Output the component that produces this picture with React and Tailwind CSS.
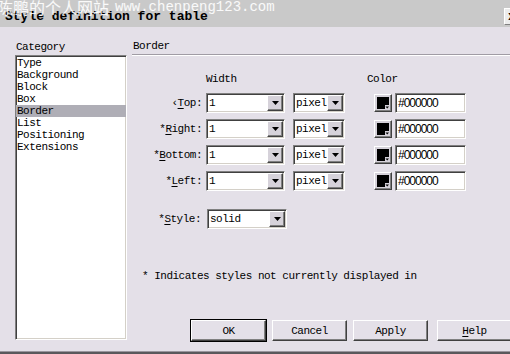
import React from "react";

const mono = { fontFamily: '"Liberation Mono", "DejaVu Sans Mono", monospace' };

const sunken =
  "border border-t-[#808080] border-l-[#808080] border-b-white border-r-white shadow-[inset_1px_1px_0_#404040,inset_-1px_-1px_0_#d4d0c8]";
const raised =
  "border border-t-white border-l-white border-b-[#404040] border-r-[#404040] shadow-[inset_-1px_-1px_0_#808080]";

const Arrow = () => (
  <svg width="7" height="4" viewBox="0 0 7 4">
    <polygon points="0,0 7,0 3.5,4" fill="#000" />
  </svg>
);

// dropdown box with the little arrow button on its right
const Select = ({ value, width }) => (
  <div className={`flex h-[20px] items-center bg-white ${sunken}`} style={{ width }}>
    <span className="flex-1 pl-[2px] leading-[16px]">{value}</span>
    <div className={`mr-[1px] flex h-[16px] w-[16px] items-center justify-center bg-[#d6d2da] ${raised}`}>
      <Arrow />
    </div>
  </div>
);

const Swatch = () => (
  <div className={`flex h-[18px] w-[18px] items-center justify-center bg-[#d6d2da] ${raised}`}>
    <svg width="12" height="12" viewBox="0 0 12 12">
      <polygon points="0,0 12,0 12,8 8,8 8,12 0,12" fill="#000" />
      <polygon points="8.5,9.5 12,9.5 10.25,11.5" fill="#000" />
    </svg>
  </div>
);

const Label = ({ pre, u, rest }) => (
  <span>
    {pre}
    <span className="underline underline-offset-2">{u}</span>
    {rest}
  </span>
);

const rows = [
  { pre: "‹", u: "T", rest: "op:" },
  { pre: "*", u: "R", rest: "ight:" },
  { pre: "*", u: "B", rest: "ottom:" },
  { pre: "*", u: "L", rest: "eft:" },
];

const categories = ["Type", "Background", "Block", "Box", "Border", "List", "Positioning", "Extensions"];

const Button = ({ children, isDefault, className = "" }) => (
  <div
    className={`flex h-[21px] w-[75px] items-center justify-center bg-[#e4e0e8] ${
      isDefault ? "outline outline-1 outline-black" : ""
    } ${raised} ${className}`}
  >
    {children}
  </div>
);

export default function App() {
  return (
    <div
      className="flex h-[354px] w-[510px] flex-col overflow-hidden bg-[#e4e0e8] text-[11px] leading-[12px] tracking-[-0.5px] text-black"
      style={mono}
    >
      {/* title bar */}
      <div className="relative h-[27px] shrink-0 bg-[#c9c9c9]">
        <div className="pl-[5px] pt-[9px] text-[13px] font-bold leading-[16px] tracking-normal">
          Style definition for table
        </div>
        {/* site watermark over the title */}
        <div className="absolute -left-[3px] -top-[2px] flex items-center whitespace-nowrap text-white/90">
          <span
            className="text-[16px] leading-[18px] tracking-normal"
            style={{ fontFamily: '"Noto Sans CJK SC", sans-serif' }}
          >
            陈鹏的个人网站
          </span>
          <span className="ml-[6px] text-[14px] leading-[18px] tracking-normal">www.chenpeng123.com</span>
        </div>
        <div className="absolute right-[-10px] top-[8px] flex h-[17px] w-[16px] items-center pl-[3px] text-[12px] font-bold bg-[#ececec] border border-t-white border-l-white border-b-[#808080]">
          x
        </div>
      </div>

      <div className="flex flex-1">
        {/* category list */}
        <div className="w-[132px] shrink-0 pl-[15px] pt-[14px]">
          <div className="pl-[1px]">Category</div>
          <div className={`mt-[2px] h-[285px] w-[112px] bg-white pt-[1px] ${sunken}`}>
            {categories.map((c) => (
              <div key={c} className={`pl-[1px] ${c === "Border" ? "bg-[#afaeb6]" : ""}`}>
                {c}
              </div>
            ))}
          </div>
        </div>

        {/* border panel */}
        <div className="flex flex-1 flex-col pt-[13px]">
          <div className="pl-[1px]">Border</div>
          <div className="mt-[2px] h-[2px] border-t border-t-[#a09ca4] border-b border-b-white" />

          <div className="mt-[17px] flex">
            <div className="ml-[74px] w-[161px]">Width</div>
            <div>Color</div>
          </div>

          <div className="mt-[8px] flex flex-col gap-[6px]">
            {rows.map((r) => (
              <div key={r.u} className="flex h-[20px] items-center">
                <div className="w-[70px] text-right">
                  <Label {...r} />
                </div>
                <div className="ml-[4px]">
                  <Select value="1" width={79} />
                </div>
                <div className="ml-[8px]">
                  <Select value="pixel" width={52} />
                </div>
                <div className="ml-[29px]">
                  <Swatch />
                </div>
                <div className={`ml-[3px] flex h-[20px] w-[71px] items-center bg-white pl-[2px] tracking-[-1px] ${sunken}`} style={{ fontFamily: '"Liberation Sans", sans-serif', fontSize: 12 }}>
                  #000000
                </div>
              </div>
            ))}
          </div>

          <div className="mt-[18px] flex h-[19px] items-center">
            <div className="w-[69px] text-right">
              <Label pre="*" u="S" rest="tyle:" />
            </div>
            <div className="ml-[6px]">
              <Select value="solid" width={80} />
            </div>
          </div>

          <div className="mt-[42px] pl-[10px]">* Indicates styles not currently displayed in</div>

          <div className="mt-[38px] flex pl-[59px]">
            <Button isDefault>OK</Button>
            <Button className="ml-[6px]">Cancel</Button>
            <Button className="ml-[6px]">Apply</Button>
            <Button className="ml-[9px] shrink-0">
              <Label pre="" u="H" rest="elp" />
            </Button>
          </div>
        </div>
      </div>

      <div className="h-[3px] shrink-0 border-t border-t-[#9a969e] bg-[#5a585c]" />
    </div>
  );
}
